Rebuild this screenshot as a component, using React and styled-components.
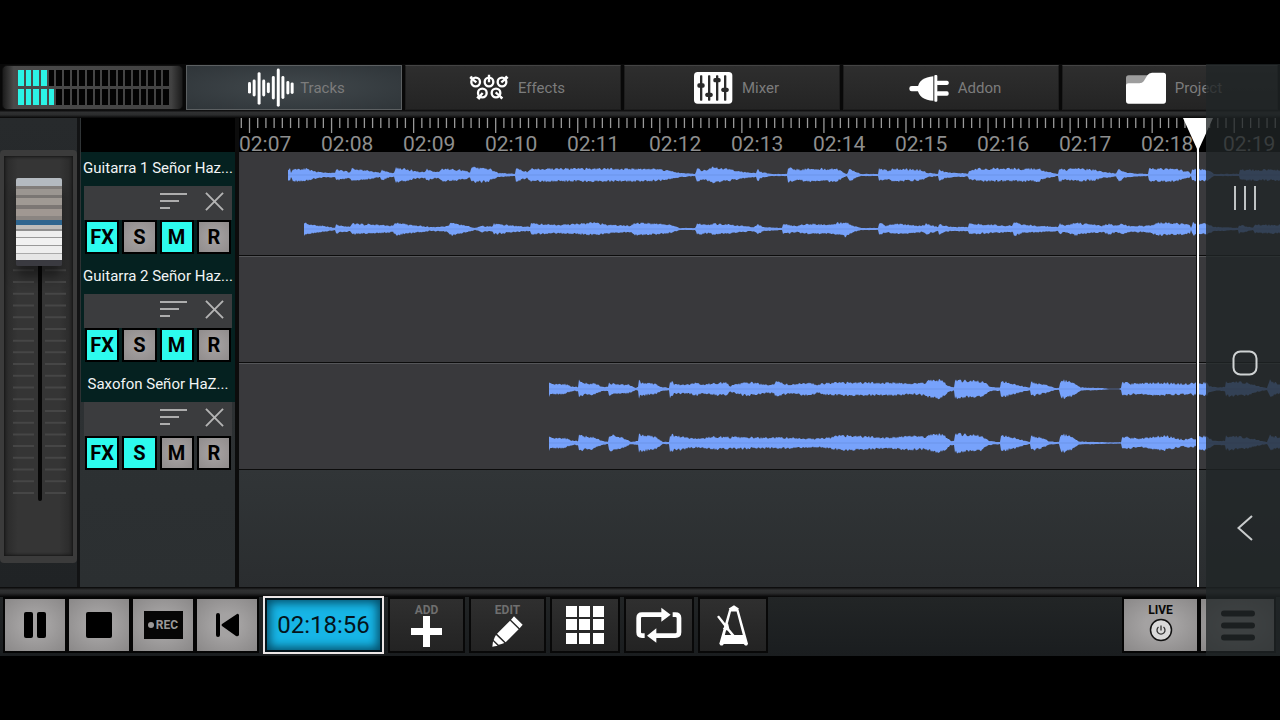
import React, { useState } from "react";
import styled, { createGlobalStyle, css } from "styled-components";

const GlobalStyle = createGlobalStyle`
  *, *::before, *::after { box-sizing: border-box; }
  body { margin: 0; background: #000; font-family: Roboto, "Liberation Sans", sans-serif; }
  button { font-family: inherit; margin: 0; padding: 0; cursor: pointer; }
`;

const Page = styled.main`
  min-height: 100vh;
  padding: 64px 0;
  display: flex;
  flex-direction: column;
  background: #000;
`;

const Device = styled.div`
  position: relative;
  flex: 1;
  display: flex;
  flex-direction: column;
  background: #1d2022;
  overflow: hidden;
`;

/* ---------- header ---------- */

const Header = styled.header`
  display: flex;
  height: 46px;
  padding: 1px 2px 0;
  gap: 3px;
  background: #080808;
`;

const Meter = styled.div`
  flex: none;
  width: 181px;
  display: flex;
  flex-direction: column;
  justify-content: center;
  gap: 3px;
  padding: 1px 13px 1px 15px;
  border: 1px solid #111;
  border-radius: 5px;
  background: linear-gradient(90deg, #1c1c1c, #4a4a4a 6%, #424242 94%, #1c1c1c);
`;

const MeterRow = styled.div`
  display: flex;
  gap: 2px;
  height: 16px;
`;

const MeterCell = styled.span`
  flex: 1;
  background: ${(p) => (p.$lit ? "#2bf3e6" : "#030303")};
`;

const Tabs = styled.nav`
  flex: 1;
  display: flex;
  gap: 3px;
  min-width: 0;
`;

const Tab = styled.button`
  flex: 1;
  display: flex;
  align-items: center;
  justify-content: center;
  gap: 5px;
  padding-left: 4px;
  border: 1px solid #1d1d1d;
  border-top-color: #444;
  background: linear-gradient(#2e2e2e, #242424);
  color: #7c7c7c;
  font-size: 15px;
  ${(p) =>
    p.$active &&
    css`
      border-color: #5c6062;
      background: radial-gradient(ellipse at center, #41484c, #2f3539);
    `}
  svg { flex: none; }
`;

const Strip = styled.div`
  flex: none;
  height: ${(p) => p.$h}px;
  background: linear-gradient(#060606, #2f3031 30%, #2b2c2d 60%, #060606);
`;

/* ---------- main area ---------- */

const Body = styled.div`
  flex: 1;
  display: flex;
  min-height: 0;
`;

const FaderColumn = styled.section`
  flex: none;
  width: 80px;
  padding: 32px 0 24px;
  border-right: 3px solid #121314;
  background: linear-gradient(#272a2c, #202325);
  display: flex;
`;

const FaderBox = styled.div`
  flex: 1;
  padding: 22px 0;
  border: 4px solid #3b3b3b;
  border-top-width: 6px;
  border-bottom-width: 7px;
  border-radius: 4px;
  background: linear-gradient(90deg, #292929, #353535 20%, #353535 80%, #292929);
  box-shadow: inset 0 0 3px 1px #151515;
  display: grid;
  justify-items: center;
  align-content: start;
  > * { grid-area: 1 / 1; }
`;

const FaderInput = styled.input`
  appearance: none;
  writing-mode: vertical-lr;
  direction: rtl;
  width: 46px;
  height: 324px;
  margin: 0;
  background: transparent;
  &::-webkit-slider-thumb {
    appearance: none;
    width: 46px;
    height: 88px;
    border-radius: 2px;
    box-shadow: 0 12px 12px rgba(0, 0, 0, 0.45);
    background: linear-gradient(
      #b4bac0 0 8px, #817d7a 8px 11px, #9b9691 11px 17px, #7a7673 17px 20px,
      #a09a94 20px 27px, #7c7774 27px 31px, #a09892 31px 38px, #8a8581 38px 42px,
      #2e658f 42px 47px, #bdbcba 47px 51px, #8f8f8f 51px 53px, #eeeeee 53px 59px,
      #999 59px 60px, #f1f1f1 60px 67px, #999 67px 68px, #eee 68px 75px,
      #aaa 75px 76px, #e6e6e6 76px 82px, #3a3a40 82px 88px
    );
  }
`;

const TrackColumn = styled.section`
  flex: none;
  width: 159px;
  padding-left: 1px;
  border-right: 4px solid #0c0c0c;
  background: linear-gradient(#303436, #2b2f31);
  display: flex;
  flex-direction: column;
`;

const TrackHead = styled.div`
  position: relative;
  z-index: 1;
  flex: none;
  height: 34px;
  margin-bottom: -6px;
  background: #000;
`;

const TrackCard = styled.article`
  flex: none;
  background: ${(p) => (p.$last ? "transparent" : "#052120")};
`;

const TrackName = styled.h2`
  margin: 0;
  height: 40px;
  padding-top: 4px;
  line-height: 36px;
  text-align: center;
  white-space: nowrap;
  overflow: hidden;
  font-size: 15px;
  font-weight: 400;
  color: #f2f5f5;
  background: #052120;
`;

const TrackTools = styled.div`
  height: 34px;
  margin: 0 3px;
  display: flex;
  align-items: center;
  justify-content: flex-end;
  gap: 18px;
  padding: 0 8px 4px 0;
  background: #3b3c3e;
`;

const IconButton = styled.button`
  border: 0;
  background: none;
  display: grid;
  place-items: center;
`;

const TrackButtons = styled.div`
  display: grid;
  grid-template-columns: repeat(4, 1fr);
  gap: 3px;
  padding: 0 4px;
`;

const TrackButton = styled.button`
  height: 34px;
  border: 2px solid #000;
  background: ${(p) =>
    p.$on ? "#2dfbee" : "radial-gradient(#a8a4a4, #908c8c)"};
  color: #000;
  font-size: 20px;
  font-weight: 700;
  line-height: 30px;
`;

const Timeline = styled.section`
  position: relative;
  flex: 1;
  min-width: 0;
  overflow: hidden;
  background: linear-gradient(#313537 75%, #2a2d2f);
`;

const Ruler = styled.div`
  position: relative;
  z-index: 1;
  height: 34px;
  margin-bottom: -3px;
  background: #000;
`;

const RulerTicks = styled.svg`
  display: block;
  width: 100%;
  height: 16px;
`;

const RulerLabels = styled.div`
  display: flex;
  color: #8e8e8e;
  font-size: 21px;
  line-height: 20px;
`;

const RulerLabel = styled.span`
  flex: none;
  width: 82px;
`;

const Lane = styled.div`
  height: 107px;
  border-top: 1px solid #555659;
  border-bottom: 1px solid #0c0c0c;
  background: #39393c;
`;

const Wave = styled.svg`
  display: block;
  width: 100%;
  height: 105px;
`;

const Playhead = styled.svg`
  position: absolute;
  z-index: 2;
  top: 0;
  left: 944px;
  width: 30px;
  height: 100%;
`;

/* ---------- bottom toolbar ---------- */

const Toolbar = styled.footer`
  flex: none;
  display: flex;
  align-items: center;
  height: 59px;
  padding: 0 4px 3px 3px;
  background: linear-gradient(#222526, #1a1d1f);
`;

const Group = styled.div`
  display: flex;
  gap: ${(p) => p.$gap}px;
  margin-left: ${(p) => (p.$end ? "auto" : "0")};
`;

const TransportButton = styled.button`
  width: ${(p) => p.$w || 64}px;
  height: 56px;
  border: 2px solid #050505;
  background: radial-gradient(ellipse at center, #a4a2a2 30%, #8a8888);
  display: flex;
  flex-direction: column;
  align-items: center;
  justify-content: center;
  color: #080808;
  font-size: 12px;
  font-weight: 700;
  line-height: 12px;
`;

const LiveButton = styled(TransportButton)`
  gap: 2px;
  padding-bottom: 4px;
`;

const RecBadge = styled.span`
  display: flex;
  align-items: center;
  justify-content: center;
  gap: 2px;
  width: 39px;
  height: 28px;
  background: #060606;
  color: #9b9999;
  &::before {
    content: "";
    width: 6px;
    height: 6px;
    border-radius: 50%;
    background: currentColor;
  }
`;

const Clock = styled.time`
  flex: none;
  width: 121px;
  height: 58px;
  margin: 0 4px;
  border: 2px solid #ece6e6;
  background: #17b5e6;
  box-shadow: inset 0 0 0 2px #04141b, inset 0 0 10px 5px #05506c;
  color: #04141c;
  font-size: 24px;
  line-height: 55px;
  text-align: center;
`;

const ToolButton = styled.button`
  width: ${(p) => (p.$wide ? 77 : 70)}px;
  height: 56px;
  border: 2px solid #080808;
  background: linear-gradient(#2f2f2f, #232323);
  color: #6f6f6f;
  font-size: 12px;
  font-weight: 700;
  line-height: 12px;
  display: flex;
  flex-direction: column;
  align-items: center;
  justify-content: center;
`;

/* ---------- system navigation overlay ---------- */

const SystemNav = styled.aside`
  position: absolute;
  z-index: 5;
  top: 0;
  right: 0;
  bottom: 0;
  width: 74px;
  padding: 51px 0 45px 4px;
  display: grid;
  grid-template-rows: repeat(3, 1fr);
  background: rgba(32, 37, 39, 0.78);
`;

/* ---------- drawings ---------- */

const TracksIcon = () => (
  <svg width="48" height="41" viewBox="742 32 144 124" stroke="#fff" strokeWidth="9" strokeLinecap="round" aria-hidden="true">
    {[[749, 82, 108], [763, 74, 117], [778, 52, 142], [792, 74, 117], [806, 83, 107], [821, 64, 126], [836, 41, 148], [850, 64, 124], [865, 79, 111], [878, 83, 109]].map(
      ([x, a, b]) => <line key={x} x1={x} x2={x} y1={a} y2={b} />
    )}
  </svg>
);

const EffectsIcon = () => (
  <svg width="48" height="40" viewBox="195 33 144 120" fill="none" stroke="#fff" strokeWidth="7" aria-hidden="true">
    {[[227, 75], [267, 75], [306, 75], [247, 108], [288, 108]].map(([x, y]) => (
      <circle key={x} cx={x} cy={y} r="13" />
    ))}
    <path d="M211 61 L229 76 M211 65 L216 58 M267 53 V76 M323 60 L304 76 M323 65 L316 58 M235 123 L248 108 M231 119 L240 126 M287 106 L306 123 M302 125 L307 119" />
  </svg>
);

const MixerIcon = () => (
  <svg width="48" height="40" viewBox="866 33 144 120" aria-hidden="true">
    <rect x="881" y="45" width="115" height="95" rx="11" fill="#fff" />
    <g fill="#2a2a2a">
      {[[902, 86], [926, 114], [950, 70], [974, 99]].map(([x, y]) => (
        <g key={x}>
          <rect x={x - 3} y="55" width="7" height="76" rx="2" />
          <rect x={x - 11} y={y - 7} width="22" height="13" rx="5" />
        </g>
      ))}
    </g>
  </svg>
);

const AddonIcon = () => (
  <svg width="48" height="40" viewBox="197 33 144 120" fill="#fff" aria-hidden="true">
    <rect x="210" y="87" width="36" height="16" rx="7" />
    <path d="M282 58 V131 C255 130 236 118 235 95 C236 72 255 60 282 58 Z" />
    <rect x="285" y="54" width="9" height="80" rx="3" />
    <rect x="290" y="71" width="38" height="13" rx="5" />
    <rect x="290" y="103" width="38" height="13" rx="5" />
  </svg>
);

const ProjectIcon = () => (
  <svg width="48" height="40" viewBox="846 33 144 120" aria-hidden="true">
    <path d="M858 84 V63 Q858 55 866 55 H924 L908 80 Z" fill="#9d9d9d" />
    <path d="M858 86 Q858 79 866 79 H898 Q907 79 911 73 L922 55 Q927 47 936 47 H970 Q978 47 978 55 V131 Q978 140 970 140 H866 Q858 140 858 131 Z" fill="#fff" />
  </svg>
);

const ListIcon = () => (
  <svg width="27" height="18" viewBox="0 0 27 18" stroke="#adadad" strokeWidth="2" aria-hidden="true">
    <path d="M0 2 H27 M0 9 H19 M0 16 H10" />
  </svg>
);

const CloseIcon = () => (
  <svg width="19" height="19" viewBox="0 0 20 20" stroke="#b4b4b4" strokeWidth="2" aria-hidden="true">
    <path d="M1 1 L19 19 M19 1 L1 19" />
  </svg>
);

const PauseIcon = () => (
  <svg width="22" height="26" viewBox="0 0 22 26" aria-hidden="true">
    <rect width="9" height="26" rx="2" /><rect x="13" width="9" height="26" rx="2" />
  </svg>
);

const StopIcon = () => (
  <svg width="26" height="26" viewBox="0 0 26 26" aria-hidden="true"><rect width="26" height="26" rx="2" /></svg>
);

const PreviousIcon = () => (
  <svg width="24" height="24" viewBox="0 0 24 24" aria-hidden="true">
    <rect x="1" y="0" width="4" height="24" rx="2" />
    <path d="M7 11 L22 1 Q23 0 24 2 V22 Q23 24 21 23 L7 13 Q6 12 7 11 Z" />
  </svg>
);

const PlusIcon = () => (
  <svg width="31" height="31" viewBox="0 0 31 31" fill="#fff" aria-hidden="true">
    <path d="M12 0 H19 V12 H31 V19 H19 V31 H12 V19 H0 V12 H12 Z" />
  </svg>
);

const PencilIcon = () => (
  <svg width="31" height="31" viewBox="337 93 93 93" fill="#fff" aria-hidden="true">
    <path d="M403 94 L429 119 L420 130 L394 104 Z M391 107 L417 133 L378 172 L352 146 Z M349 150 L374 174 Q366 178 357 179 L342 165 Q344 157 349 150 Z M340 169 L354 182 L338 185 Z" />
  </svg>
);

const GridIcon = () => (
  <svg width="38" height="38" viewBox="0 0 38 38" fill="#fff" aria-hidden="true">
    {[0, 13, 27].map((y) => [0, 13, 27].map((x) => <rect key={`${x}-${y}`} x={x} y={y} width="11" height="11" />))}
  </svg>
);

const LoopIcon = () => (
  <svg width="46" height="36" viewBox="770 64 138 108" fill="none" stroke="#fff" strokeWidth="14" aria-hidden="true">
    <path d="M796 150 H788 Q778 150 778 140 V97 Q778 87 788 87 H850" />
    <path d="M880 87 H888 Q899 87 899 97 V140 Q899 150 888 150 H826" />
    <path d="M846 66 L874 87 L846 108 Z M831 128 L803 150 L831 171 Z" fill="#fff" stroke="none" />
  </svg>
);

const MetronomeIcon = () => (
  <svg width="32" height="41" viewBox="1012 60 98 124" fill="#fff" aria-hidden="true">
    <path d="M1048 70 L1064 60 L1079 70 L1076 76 H1051 Z" />
    <path fillRule="evenodd" d="M1049 74 H1078 L1107 178 L1104 183 H1098 L1094 179 H1033 L1029 183 H1023 L1019 178 Z M1055 79 L1036 151 H1091 L1072 79 Z" />
    <path d="M1012 95 L1018 91 L1040 119 L1046 116 L1050 133 L1066 152 H1056 L1045 138 L1030 132 L1035 125 Z" />
  </svg>
);

const PowerIcon = () => (
  <svg width="24" height="24" viewBox="0 0 24 24" fill="none" aria-hidden="true">
    <circle cx="12" cy="12" r="10.5" fill="#d9d9d9" stroke="#111" strokeWidth="1.5" />
    <path d="M12 7.5 V12.5 M9.5 9 A4 4 0 1 0 14.5 9" stroke="#333" strokeWidth="1.3" />
  </svg>
);

const MenuIcon = () => (
  <svg width="34" height="31" viewBox="0 0 34 31" stroke="#0c0c0c" strokeWidth="6" strokeLinecap="round" aria-hidden="true">
    <path d="M3 3.5 H31 M3 15.5 H31 M3 27.5 H31" />
  </svg>
);

const FaderScale = () => (
  <svg width="56" height="324" viewBox="0 0 56 324" aria-hidden="true">
    {Array.from({ length: 20 }, (_, i) => (
      <path key={i} d={`M2 ${315 - i * 11.72} H23 M34 ${315 - i * 11.72} H55`} stroke="#464646" strokeWidth="2" />
    ))}
    <rect x="27" y="60" width="4" height="263" rx="2" fill="#070707" />
  </svg>
);

/* ---------- waveform data: [timeline x, peak height] ---------- */

const GUITAR_LEFT = [[49, 6], [51, 6], [52, 2], [54, 6], [66, 6], [73, 4], [81, 2.5], [96, 2], [97, 5], [111, 3], [113, 6], [121, 5], [130, 4], [141, 2], [143, 5], [151, 2], [155, 2], [157, 7], [163, 6], [181, 3], [186, 3], [188, 6], [195, 3], [200, 3], [203, 6], [220, 5], [231, 3], [233, 7], [250, 6], [259, 2], [276, 1], [277, 6], [288, 3], [292, 6], [411, 6], [426, 5], [441, 2], [456, 1], [458, 6], [464, 4], [474, 7], [491, 5.5], [505, 3], [517, 2], [519, 7], [521, 3], [533, 1], [548, 1], [549, 7], [561, 5], [568, 6], [598, 6], [605, 2], [608, 1], [611, 7], [614, 4], [622, 1], [639, 1], [640, 6], [650, 4], [654, 6], [682, 5], [689, 2], [699, 1], [700, 6], [705, 3], [715, 2], [729, 1.5], [730, 4], [740, 6], [801, 6], [803, 4], [819, 1], [820, 6], [826, 5], [836, 6], [856, 5], [863, 3], [877, 1.5], [880, 7], [884, 3], [894, 1.5], [909, 1], [910, 6], [936, 6], [950, 3], [952, 1], [953, 6], [968, 5], [972, 3], [975, 1], [1000, 1], [1001, 5], [1041, 5], [1400, 5]];
const GUITAR_RIGHT = [[65, 7], [68, 5], [82, 3], [96, 1], [97, 4], [111, 2], [113, 5], [140, 4], [154, 3], [157, 6], [170, 4], [190, 2], [200, 2], [209, 3], [212, 6], [228, 3], [236, 1], [243, 3], [253, 2], [255, 5], [275, 3], [291, 2], [292, 5], [321, 4], [341, 5], [355, 6], [368, 4], [391, 3], [396, 6], [421, 5], [431, 4], [441, 1], [456, 1], [458, 5], [470, 4], [474, 5], [491, 4], [515, 2], [519, 5], [524, 2], [543, 1], [544, 5], [557, 3], [571, 5], [588, 4], [606, 7], [614, 3], [622, 1], [639, 1], [640, 6], [647, 3], [657, 5], [683, 3], [687, 5], [699, 2], [700, 5], [710, 2], [729, 2], [730, 5], [773, 3], [776, 7], [783, 4], [800, 3], [819, 2], [821, 5], [826, 3], [836, 6], [844, 5], [863, 3], [870, 5], [878, 3], [882, 5], [890, 3], [909, 3], [920, 6], [945, 5], [951, 4], [952, 1], [954, 6], [969, 5], [975, 2], [999, 1], [1000, 4], [1014, 1], [1016, 4], [1400, 4]];
const SAX_LEFT = [[310, 8], [312, 5], [325, 5], [333, 2], [339, 2], [340, 8], [342, 6], [356, 5], [363, 2], [369, 2], [370, 8], [372, 5], [390, 4], [397, 1], [399, 2], [400, 8], [402, 6], [416, 5], [422, 2], [430, 1], [431, 8], [435, 5], [445, 4], [458, 6], [462, 4], [480, 6], [487, 6], [491, 3], [505, 6], [515, 6], [526, 4], [535, 4], [536, 7], [551, 4], [565, 6], [576, 5], [578, 3], [582, 5], [596, 6], [660, 6], [671, 5], [685, 6], [689, 8], [702, 9], [709, 3], [715, 1.5], [716, 9], [720, 8], [745, 7], [751, 2], [761, 1.5], [762, 8], [775, 5], [786, 2], [791, 1.5], [792, 7], [806, 4], [816, 1], [820, 1], [822, 9], [835, 6], [842, 1.5], [860, 1], [867, 0.5], [870, 0], [880, 0], [882, 1], [883, 7], [892, 5], [920, 6], [945, 5], [968, 6], [970, 3], [978, 1.5], [986, 2], [987, 7], [1010, 6], [1017, 3], [1028, 1], [1031, 8], [1041, 4], [1400, 4]];
const SAX_RIGHT = [[310, 8], [312, 5], [325, 5], [333, 2], [339, 2], [340, 7], [352, 6], [363, 2], [369, 1], [370, 8], [384, 5], [392, 1], [399, 2], [400, 8], [416, 6], [424, 1], [430, 1], [431, 8], [443, 6], [458, 4], [475, 6], [520, 5], [551, 5], [575, 4], [590, 5], [600, 7], [630, 6], [650, 5], [670, 7], [685, 6], [697, 9], [704, 8], [712, 2], [715, 2], [716, 9], [735, 7], [742, 7], [750, 2], [761, 1], [762, 8], [776, 5], [786, 2], [791, 1], [792, 7], [803, 5], [810, 1.5], [820, 1], [822, 9], [833, 6], [840, 1.5], [870, 0.6], [882, 0.6], [883, 6], [900, 4], [925, 7], [945, 3], [950, 5], [957, 3], [960, 7], [968, 6], [975, 2], [986, 2], [987, 7], [1010, 5], [1017, 3], [1028, 1], [1031, 7], [1041, 5], [1400, 4]];

function wavePath(points, centre) {
  const upper = [];
  const lower = [];
  let seed = 11;
  const random = () => {
    seed = (seed * 16807) % 2147483647;
    return seed / 2147483647;
  };
  let k = 0;
  for (let x = points[0][0]; x <= points[points.length - 1][0]; x += 1) {
    while (k < points.length - 2 && points[k + 1][0] <= x) k += 1;
    const [x0, a0] = points[k];
    const [x1, a1] = points[k + 1];
    const amp = a0 + ((a1 - a0) * (x - x0)) / (x1 - x0);
    const top = amp * (0.8 + random() * 0.42);
    const bottom = amp * (0.8 + random() * 0.42);
    upper.push(`${x} ${(centre - top).toFixed(1)}`);
    lower.unshift(`${x} ${(centre + bottom).toFixed(1)}`);
  }
  return `M${upper.join("L")}L${lower.join("L")}Z`;
}

const TRACKS = [
  { name: "Guitarra 1 Señor Haz...", on: ["FX", "M"], wave: [GUITAR_LEFT, GUITAR_RIGHT] },
  { name: "Guitarra 2 Señor Haz...", on: ["FX", "M"], wave: [] },
  { name: "Saxofon Señor HaZ...", on: ["FX", "S"], wave: [SAX_LEFT, SAX_RIGHT] },
];

const TABS = [
  ["Tracks", TracksIcon],
  ["Effects", EffectsIcon],
  ["Mixer", MixerIcon],
  ["Addon", AddonIcon],
  ["Project", ProjectIcon],
];

const SECONDS = Array.from({ length: 13 }, (_, i) => {
  const t = 127 + i;
  return `${String(Math.floor(t / 60)).padStart(2, "0")}:${String(t % 60).padStart(2, "0")}`;
});

function LevelRow({ lit, label }) {
  return (
    <MeterRow role="meter" aria-label={label} aria-valuenow={lit} aria-valuemin={0} aria-valuemax={20}>
      {Array.from({ length: 20 }, (_, i) => <MeterCell key={i} $lit={i < lit} />)}
    </MeterRow>
  );
}

function Track({ track, last }) {
  const [on, setOn] = useState(track.on);
  const toggle = (key) => setOn(on.includes(key) ? on.filter((k) => k !== key) : [...on, key]);
  return (
    <TrackCard $last={last}>
      <TrackName>{track.name}</TrackName>
      <TrackTools>
        <IconButton aria-label="Track options"><ListIcon /></IconButton>
        <IconButton aria-label="Remove track"><CloseIcon /></IconButton>
      </TrackTools>
      <TrackButtons>
        {["FX", "S", "M", "R"].map((key) => (
          <TrackButton key={key} $on={on.includes(key)} aria-pressed={on.includes(key)} onClick={() => toggle(key)}>
            {key}
          </TrackButton>
        ))}
      </TrackButtons>
    </TrackCard>
  );
}

export default function App() {
  const [tab, setTab] = useState("Tracks");
  return (
    <Page>
      <GlobalStyle />
      <Device>
        <Header>
          <Meter>
            <LevelRow lit={4} label="Left level" />
            <LevelRow lit={5} label="Right level" />
          </Meter>
          <Tabs>
            {TABS.map(([name, Icon]) => (
              <Tab key={name} $active={name === tab} onClick={() => setTab(name)}>
                <Icon />
                {name}
              </Tab>
            ))}
          </Tabs>
        </Header>
        <Strip $h={8} />
        <Body>
          <FaderColumn>
            <FaderBox>
              <FaderScale />
              <FaderInput type="range" min="0" max="100" defaultValue="100" aria-label="Master volume" />
            </FaderBox>
          </FaderColumn>
          <TrackColumn>
            <TrackHead />
            {TRACKS.map((track, i) => (
              <Track key={track.name} track={track} last={i === TRACKS.length - 1} />
            ))}
          </TrackColumn>
          <Timeline>
            <Ruler>
              <RulerTicks aria-hidden="true">
                {Array.from({ length: 240 }, (_, i) => (
                  <line key={i} x1={2.3 + i * 8.206} x2={2.3 + i * 8.206} y1="0" y2={i % 10 === 1 ? 15 : 10} stroke="#999" strokeWidth="1.3" />
                ))}
              </RulerTicks>
              <RulerLabels>
                {SECONDS.map((label) => <RulerLabel key={label}>{label}</RulerLabel>)}
              </RulerLabels>
            </Ruler>
            {TRACKS.map((track) => (
              <Lane key={track.name}>
                <Wave aria-hidden="true">
                  {track.wave.map((points, c) => (
                    <g key={c}>
                      <path d={wavePath(points, 25 + c * 54)} fill="#77a2fb" />
                      <line x1={points[0][0]} x2="1400" y1={25 + c * 54} y2={25 + c * 54} stroke="#6288d8" strokeWidth="1" strokeOpacity="0.5" />
                    </g>
                  ))}
                </Wave>
              </Lane>
            ))}
            <Playhead aria-hidden="true">
              <rect x="13" width="1" height="100%" fill="#111" />
              <rect x="14" width="2" height="100%" fill="#fff" />
              <polygon points="0,0 30,0 15,33" fill="#fff" />
            </Playhead>
          </Timeline>
        </Body>
        <Strip $h={10} />
        <Toolbar>
          <Group $gap={0}>
            <TransportButton aria-label="Pause"><PauseIcon /></TransportButton>
            <TransportButton aria-label="Stop"><StopIcon /></TransportButton>
            <TransportButton><RecBadge>REC</RecBadge></TransportButton>
            <TransportButton aria-label="Go to start"><PreviousIcon /></TransportButton>
          </Group>
          <Clock>02:18:56</Clock>
          <Group $gap={4}>
            <ToolButton $wide>ADD<PlusIcon /></ToolButton>
            <ToolButton $wide>EDIT<PencilIcon /></ToolButton>
            <ToolButton aria-label="Pads"><GridIcon /></ToolButton>
            <ToolButton aria-label="Loop"><LoopIcon /></ToolButton>
            <ToolButton aria-label="Metronome"><MetronomeIcon /></ToolButton>
          </Group>
          <Group $gap={0} $end>
            <LiveButton $w={77}>LIVE<PowerIcon /></LiveButton>
            <TransportButton $w={77} aria-label="Menu"><MenuIcon /></TransportButton>
          </Group>
        </Toolbar>
        <SystemNav>
          <IconButton aria-label="Recent apps">
            <svg width="24" height="24" viewBox="0 0 24 24" stroke="#bfc3c4" strokeWidth="2"><path d="M2 0 V24 M12 0 V24 M22 0 V24" /></svg>
          </IconButton>
          <IconButton aria-label="Home">
            <svg width="26" height="26" viewBox="0 0 26 26" fill="none" stroke="#d0d3d4" strokeWidth="2"><rect x="1.5" y="1.5" width="23" height="23" rx="7" /></svg>
          </IconButton>
          <IconButton aria-label="Back">
            <svg width="16" height="26" viewBox="0 0 16 26" fill="none" stroke="#c9cccd" strokeWidth="2"><path d="M15 1 L1.5 13 L15 25" /></svg>
          </IconButton>
        </SystemNav>
      </Device>
    </Page>
  );
}
